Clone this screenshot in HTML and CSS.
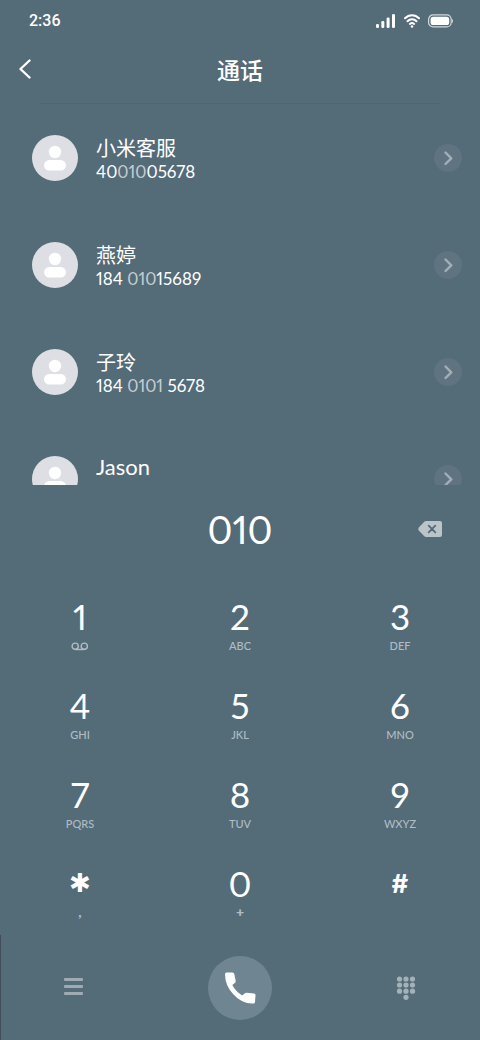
FILE: index.html
```
<!DOCTYPE html>
<html lang="zh-CN">
<head>
<meta charset="utf-8">
<meta name="viewport" content="width=device-width, initial-scale=1">
<title>通话</title>
<link rel="stylesheet" href="styles.css">
</head>
<body>
<svg class="defs" width="0" height="0" aria-hidden="true">
  <symbol id="avatar" viewBox="0 0 46 46">
    <circle cx="23" cy="23" r="23" fill="#dddfe4"/>
    <circle cx="23" cy="17" r="6.2" fill="#fff"/>
    <rect x="12" y="25" width="22" height="10.5" rx="5.2" fill="#fff"/>
  </symbol>
  <symbol id="chevron" viewBox="0 0 28 28">
    <path d="M11.500 8.500 17.300 14.300 11.500 20" fill="none" stroke="#a3aeb6" stroke-width="2.400" stroke-linecap="round" stroke-linejoin="round"/>
  </symbol>
</svg>
<div class="phone">
  <div class="status">
    <time>2:36</time>
    <div class="status-icons">
      <svg width="20" height="14" viewBox="0 0 20 14" fill="#fff">
        <rect x="0" y="10" width="3" height="4" rx="1.3"/><rect x="5.3" y="7" width="3" height="7" rx="1.3"/><rect x="10.6" y="3.5" width="3" height="10.5" rx="1.3"/><rect x="16" y="0" width="3" height="14" rx="1.3"/>
      </svg>
      <svg width="16" height="14" viewBox="0 0 16 14" fill="none" stroke="#fff" stroke-width="2" stroke-linecap="round">
        <path d="M1 4.3C5 .1 11 .1 15 4.3M3.5 7.2C6 4.7 10 4.7 12.5 7.2M5.9 9.9C7.2 8.8 8.8 8.8 10.1 9.9"/><circle cx="8" cy="12.5" r="1.2" fill="#fff" stroke="none"/>
      </svg>
      <svg width="25" height="14" viewBox="0 0 25 14">
        <rect x=".6" y=".9" width="22.6" height="12" rx="4.5" fill="none" stroke="#d4dade" stroke-width="1.2"/>
        <rect x="2.6" y="2.8" width="18.6" height="8.2" rx="2.6" fill="#fff"/><path d="M24 5v4q1-.7 1-2t-1-2" fill="#d4dade"/>
      </svg>
    </div>
  </div>
  <header class="topbar">
    <button class="icon-btn" aria-label="返回"><svg width="14" height="20" viewBox="0 0 14 20"><path d="M11.500 1.500 2.500 10l9 8.500" fill="none" stroke="#fff" stroke-width="2.400" stroke-linecap="round" stroke-linejoin="round"/></svg></button>
    <h1>通话</h1>
  </header>
  <hr class="rule">
  <ul class="contacts">
    <li class="contact"><svg class="avatar"><use href="#avatar"/></svg><div class="info"><span class="name">小米客服</span><span class="number">40<em>010</em>05678</span></div><button class="more" aria-label="小米客服详情"><svg><use href="#chevron"/></svg></button></li>
    <li class="contact"><svg class="avatar"><use href="#avatar"/></svg><div class="info"><span class="name">燕婷</span><span class="number">184 <em>010</em>15689</span></div><button class="more" aria-label="燕婷详情"><svg><use href="#chevron"/></svg></button></li>
    <li class="contact"><svg class="avatar"><use href="#avatar"/></svg><div class="info"><span class="name">子玲</span><span class="number">184 <em>0101</em> 5678</span></div><button class="more" aria-label="子玲详情"><svg><use href="#chevron"/></svg></button></li>
    <li class="contact"><svg class="avatar"><use href="#avatar"/></svg><div class="info"><span class="name latin">Jason</span><span class="number"></span></div><button class="more" aria-label="Jason详情"><svg><use href="#chevron"/></svg></button></li>
  </ul>
  <div class="entry">
    <output>010</output>
    <button class="icon-btn" aria-label="删除"><svg width="24" height="18" viewBox="0 0 24 18"><path d="M8 1h14q2 0 2 2v12q0 2-2 2H8q-1 0-2-1L.8 10.4q-1-1.4 0-2.8L6 2q1-1 2-1Z" fill="#bac4c9"/><path d="m10.7 5.7 6.6 6.6m0-6.6-6.6 6.6" stroke="#546b78" stroke-width="1.8" stroke-linecap="round"/></svg></button>
  </div>
  <div class="keypad">
    <button class="key"><b>1</b><small><svg width="18" height="9" viewBox="0 0 18 9" fill="none" stroke="#b1bdc4" stroke-width="1.4"><circle cx="4.2" cy="4.200" r="3.1"/><circle cx="13.3" cy="4.200" r="3.1"/><path d="M4.200 7.500h9.100"/></svg></small></button>
    <button class="key"><b>2</b><small>ABC</small></button>
    <button class="key"><b>3</b><small>DEF</small></button>
    <button class="key"><b>4</b><small>GHI</small></button>
    <button class="key"><b>5</b><small>JKL</small></button>
    <button class="key"><b>6</b><small>MNO</small></button>
    <button class="key"><b>7</b><small>PQRS</small></button>
    <button class="key"><b>8</b><small>TUV</small></button>
    <button class="key"><b>9</b><small>WXYZ</small></button>
    <button class="key" aria-label="*"><b class="star">✱</b><small class="mark">,</small></button>
    <button class="key"><b>0</b><small class="mark">+</small></button>
    <button class="key"><b class="hash">#</b><small></small></button>
  </div>
  <nav class="actions">
    <button class="icon-btn" aria-label="菜单"><svg width="20" height="20" viewBox="0 0 20 20" fill="#9eabb3"><rect y="0" width="19" height="3" rx="1"/><rect y="7" width="19" height="3" rx="1"/><rect y="14" width="19" height="3" rx="1"/></svg></button>
    <button class="call" aria-label="拨打"><svg width="32" height="32" viewBox="0 0 32 32"><path d="M2.500.5H8.500Q10 .5 10.300 2l1.400 7q.2 1-.6 1.800l-2.800 2.200q3.300 6.300 9.900 10.500l2.700-2.200q.8-.7 1.800-.6l7.400.7q1.400.2 1.400 1.700l-.5 6.800q-.1 1.500-1.700 1.600Q18 32 9.500 22.500 1 14 1 2.100 1.100.6 2.500.5Z" fill="#fff"/></svg></button>
    <button class="icon-btn" aria-label="拨号盘"><svg width="20" height="26" viewBox="0 0 20 26" fill="#a3b1b9"><circle cx="3.500" cy="4" r="2.600"/><circle cx="10" cy="4" r="2.600"/><circle cx="16.500" cy="4" r="2.600"/><circle cx="3.500" cy="10" r="2.600"/><circle cx="10" cy="10" r="2.600"/><circle cx="16.500" cy="10" r="2.600"/><circle cx="3.500" cy="16.200" r="2.600"/><circle cx="10" cy="16.200" r="2.600"/><circle cx="16.500" cy="16.200" r="2.600"/><circle cx="10" cy="22.300" r="2.600"/></svg></button>
  </nav>
</div>
</body>
</html>
```
FILE: styles.css
```
* { box-sizing: border-box; margin: 0; padding: 0; }
body {
  background: #546b78;
  color: #fff;
  font-family: Lato, "Noto Sans CJK SC", sans-serif;
  font-variant-numeric: proportional-nums;
}
button { background: none; border: 0; color: inherit; font: inherit; font-variant-numeric: inherit; cursor: pointer; }
svg { display: block; }
.defs { position: absolute; }
.phone { min-height: 100vh; display: flex; flex-direction: column; }
.status {
  height: 40px;
  padding: 2px 27px 0 29px;
  display: flex;
  align-items: center;
  justify-content: space-between;
}
.status time { font: 500 16px/20px Roboto, sans-serif; }
.status-icons { display: flex; gap: 8px; }
.topbar {
  height: 63px;
  padding: 0 18px;
  display: grid;
  grid-template-columns: 24px 1fr 24px;
  align-items: center;
}
.topbar h1 { font-size: 23px; line-height: 32px; font-weight: 500; text-align: center; padding-bottom: 4px; }
.topbar .icon-btn { padding-bottom: 6px; }
.rule { border: 0; height: 1px; background: #50656f; margin: 0 40px; }
.contacts {
  list-style: none;
  height: 381px;
  overflow: hidden;
  padding: 0 18px 0 32px;
}
.contact { height: 107px; display: flex; align-items: center; gap: 18px; }
.avatar { width: 46px; height: 46px; flex: none; }
.info { flex: 1; display: flex; flex-direction: column; }
.name { font-size: 20px; line-height: 28px; }
.name.latin { font-size: 22px; line-height: 24px; padding-bottom: 4px; }
.number { font-size: 17px; line-height: 20px; min-height: 20px; }
.number em { font-style: normal; color: #c5ced3; }
.more { border-radius: 50%; background: #5f7480; }
.more svg { width: 28px; height: 28px; }
.entry {
  height: 88px;
  padding: 0 36px;
  display: grid;
  grid-template-columns: 26px 1fr 26px;
  align-items: center;
}
.entry output { grid-column: 2; text-align: center; font-size: 38px; line-height: 44px; font-weight: 400; }
.keypad {
  padding-top: 23px;
  display: grid;
  grid-template-columns: repeat(3, 1fr);
  grid-template-rows: 89px 89px 89px 72px;
}
.key { display: flex; flex-direction: column; align-items: center; }
.key b { font-size: 35px; line-height: 40px; height: 43px; font-weight: 400; }
.key small { font-size: 11px; line-height: 14px; min-height: 14px; color: #b1bdc4; display: flex; align-items: center; font-weight: 500; }
.key .star { font-family: "DejaVu Sans", sans-serif; font-size: 26px; }
.key .hash { font-size: 27px; font-weight: 900; }
.key .mark { font-size: 14px; line-height: 12px; min-height: 12px; font-weight: 900; }
.actions {
  flex: 1;
  min-height: 105px;
  display: flex;
  align-items: center;
  justify-content: space-between;
  padding: 0 64px 0 63px;
  border-left: 1px solid #414e59;
}
.call { width: 64px; height: 64px; border-radius: 50%; background: #6f8692; display: grid; place-items: center; }
```
